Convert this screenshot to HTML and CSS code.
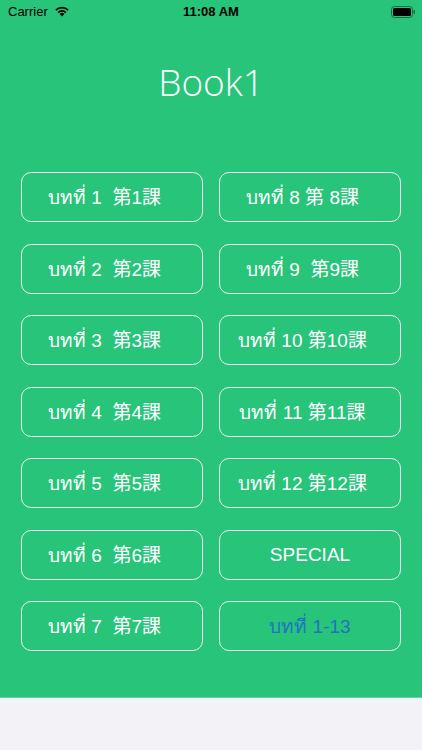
FILE: index.html
```html
<!DOCTYPE html>
<html>
<head>
<meta charset="utf-8">
<link rel="stylesheet" href="styles.css">
</head>
<body>
<div class="screen">
  <div class="status">
    <div class="st-left">Carrier
      <svg class="wifi" width="16" height="12" viewBox="0 0 16 12"><path d="M8 11.5 L5.6 8.9 A3.4 3.4 0 0 1 10.4 8.9 Z" fill="#000"/><path d="M3.6 6.9 A6.2 6.2 0 0 1 12.4 6.9 L11.2 8.2 A4.5 4.5 0 0 0 4.8 8.2 Z" fill="#000"/><path d="M1.3 4.5 A9.5 9.5 0 0 1 14.7 4.5 L13.5 5.8 A7.8 7.8 0 0 0 2.5 5.8 Z" fill="#000"/></svg>
    </div>
    <div class="st-time">11:08 AM</div>
    <div class="st-right">
      <svg width="24" height="12" viewBox="0 0 24 12"><rect x="0.5" y="0.5" width="21" height="11" rx="3" fill="none" stroke="#1a6b45" stroke-width="1"/><rect x="2" y="2" width="18" height="8" rx="1.5" fill="#000"/><rect x="22.5" y="4" width="1.5" height="4" rx="0.7" fill="#1a6b45"/></svg>
    </div>
  </div>
  <h1 class="title">Book1</h1>
  <div class="grid">
    <div class="btn lesson">บทที่ 1  第1課</div>
    <div class="btn lesson">บทที่ 8 第 8課</div>
    <div class="btn lesson">บทที่ 2  第2課</div>
    <div class="btn lesson">บทที่ 9  第9課</div>
    <div class="btn lesson">บทที่ 3  第3課</div>
    <div class="btn lesson">บทที่ 10 第10課</div>
    <div class="btn lesson">บทที่ 4  第4課</div>
    <div class="btn lesson">บทที่ 11 第11課</div>
    <div class="btn lesson">บทที่ 5  第5課</div>
    <div class="btn lesson">บทที่ 12 第12課</div>
    <div class="btn lesson">บทที่ 6  第6課</div>
    <div class="btn">SPECIAL</div>
    <div class="btn lesson">บทที่ 7  第7課</div>
    <div class="btn blue">บทที่ 1-13</div>
  </div>
</div>
<div class="bottom"></div>
</body>
</html>
```
FILE: styles.css
```css
html, body { margin: 0; padding: 0; }
body {
  width: 422px; height: 750px; overflow: hidden;
  background: #f2f2f7;
  font-family: "Liberation Sans", "Noto Sans", "Noto Sans CJK JP", sans-serif;
}
.screen {
  background: #27c47a;
  height: 698px;
  box-sizing: border-box;
  border-bottom: 1px solid #5fd49c;
}
.status {
  height: 23px;
  display: flex;
  align-items: center;
  padding: 0 7px 0 8px;
  font-size: 13px;
  color: #000;
  position: relative;
}
.st-left { display: flex; align-items: center; gap: 6px; flex: 1; }
.wifi { margin-top: -1px; }
.st-time { font-weight: bold; font-size: 13px; position: absolute; left: 0; right: 0; text-align: center; }
.st-right { flex: 1; display: flex; justify-content: flex-end; }
.title {
  margin: 0;
  padding-top: 36px;
  height: 45px;
  line-height: 45px;
  text-align: center;
  color: #fff;
  font-weight: 300;
  font-size: 37px;
  font-family: "Open Sans", "Liberation Sans", sans-serif;
}
.grid {
  margin-top: 68px;
  padding: 0 21px;
  display: grid;
  grid-template-columns: 1fr 1fr;
  column-gap: 16px;
  row-gap: 21.5px;
}
.btn {
  height: 50px;
  box-sizing: border-box;
  border: 1px solid #e6f7ee;
  border-radius: 10px;
  display: flex; align-items: center; justify-content: center;
  color: #fff;
  font-size: 19px;
  white-space: pre;
}
.btn.lesson { padding-right: 15px; }
.btn.blue { color: #1f74c0; }
```
